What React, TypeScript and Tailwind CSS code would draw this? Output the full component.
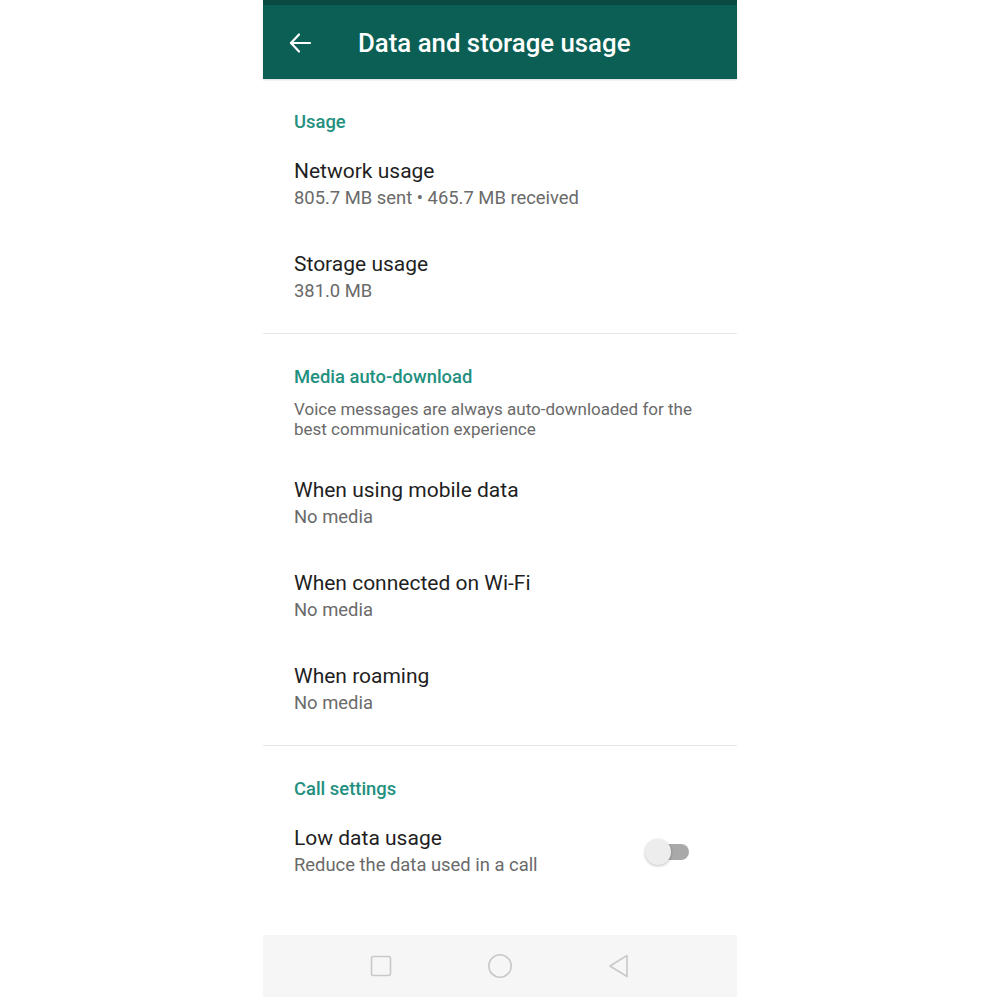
import type { ReactNode } from "react";

const font = { fontFamily: "Roboto, 'Noto Sans', sans-serif" };

const SectionHeader = ({ children }: { children: ReactNode }) => (
  <div className="px-[31px] pt-[31px] pb-[4px] text-[18.4px] leading-[24px] font-medium text-[#23907f]">
    {children}
  </div>
);

const Item = ({
  title,
  subtitle,
  right,
}: {
  title: string;
  subtitle: string;
  right?: ReactNode;
}) => (
  <div className="flex items-center justify-between py-[20px] pl-[31px] pr-[48px]">
    <div>
      <div className="text-[21px] leading-[27px] text-[#1f1f1f]">{title}</div>
      <div className="text-[18.4px] leading-[26px] text-[#6a6a6a]">{subtitle}</div>
    </div>
    {right}
  </div>
);

const Divider = () => <div className="h-px bg-[#e8e8e8]" />;

const Toggle = () => (
  <div className="relative h-[26px] w-[44px]">
    <div className="absolute right-0 top-[5px] h-[16px] w-[34px] rounded-full bg-[#a9a9a9]" />
    <div className="absolute left-0 top-0 h-[26px] w-[26px] rounded-full bg-[#ededed] shadow-[0_1px_3px_rgba(0,0,0,0.25)]" />
  </div>
);

export default function App() {
  return (
    <div className="min-h-[1000px] bg-white" style={font}>
      <div className="mx-auto flex w-[474px] flex-col">
        <div className="h-[5px] bg-[#0a4a42]" />
        <div className="flex h-[74px] items-center bg-[#0b5f55] pt-[2px] text-white shadow-[0_1px_2px_rgba(0,0,0,0.15)]">
          <svg
            width="24"
            height="24"
            viewBox="0 0 24 24"
            fill="none"
            stroke="currentColor"
            strokeWidth="2.2"
            strokeLinecap="round"
            strokeLinejoin="round"
            className="ml-[25px]"
          >
            <path d="M3 12H22" />
            <path d="M11 3.5 3 12l8 8.5" />
          </svg>
          <div className="ml-[46px] text-[25.8px] font-medium">
            Data and storage usage
          </div>
        </div>

        <SectionHeader>Usage</SectionHeader>
        <Item title="Network usage" subtitle="805.7 MB sent • 465.7 MB received" />
        <Item title="Storage usage" subtitle="381.0 MB" />
        <div className="h-[9px]" />
        <Divider />

        <SectionHeader>Media auto-download</SectionHeader>
        <div className="mt-[6px] mb-[18px] pl-[31px] pr-[36px] text-[17px] leading-[20px] text-[#6a6a6a]">
          Voice messages are always auto-downloaded for the best communication experience
        </div>
        <Item title="When using mobile data" subtitle="No media" />
        <Item title="When connected on Wi-Fi" subtitle="No media" />
        <Item title="When roaming" subtitle="No media" />
        <div className="h-[9px]" />
        <Divider />

        <SectionHeader>Call settings</SectionHeader>
        <Item
          title="Low data usage"
          subtitle="Reduce the data used in a call"
          right={<Toggle />}
        />

        <div className="mt-[37px] flex h-[62px] items-center justify-center gap-[95px] bg-[#f6f6f6] text-[#c9c9c9]">
          <svg width="24" height="24" viewBox="0 0 24 24" fill="none" stroke="currentColor" strokeWidth="1.6">
            <rect x="2.5" y="2.5" width="19" height="19" rx="2" />
          </svg>
          <svg width="24" height="24" viewBox="0 0 24 24" fill="none" stroke="currentColor" strokeWidth="1.6">
            <circle cx="12" cy="12" r="11.2" />
          </svg>
          <svg width="24" height="24" viewBox="0 0 24 24" fill="none" stroke="currentColor" strokeWidth="1.6" strokeLinejoin="round">
            <path d="M20 1.5 3 12l17 10.5z" />
          </svg>
        </div>
      </div>
    </div>
  );
}
